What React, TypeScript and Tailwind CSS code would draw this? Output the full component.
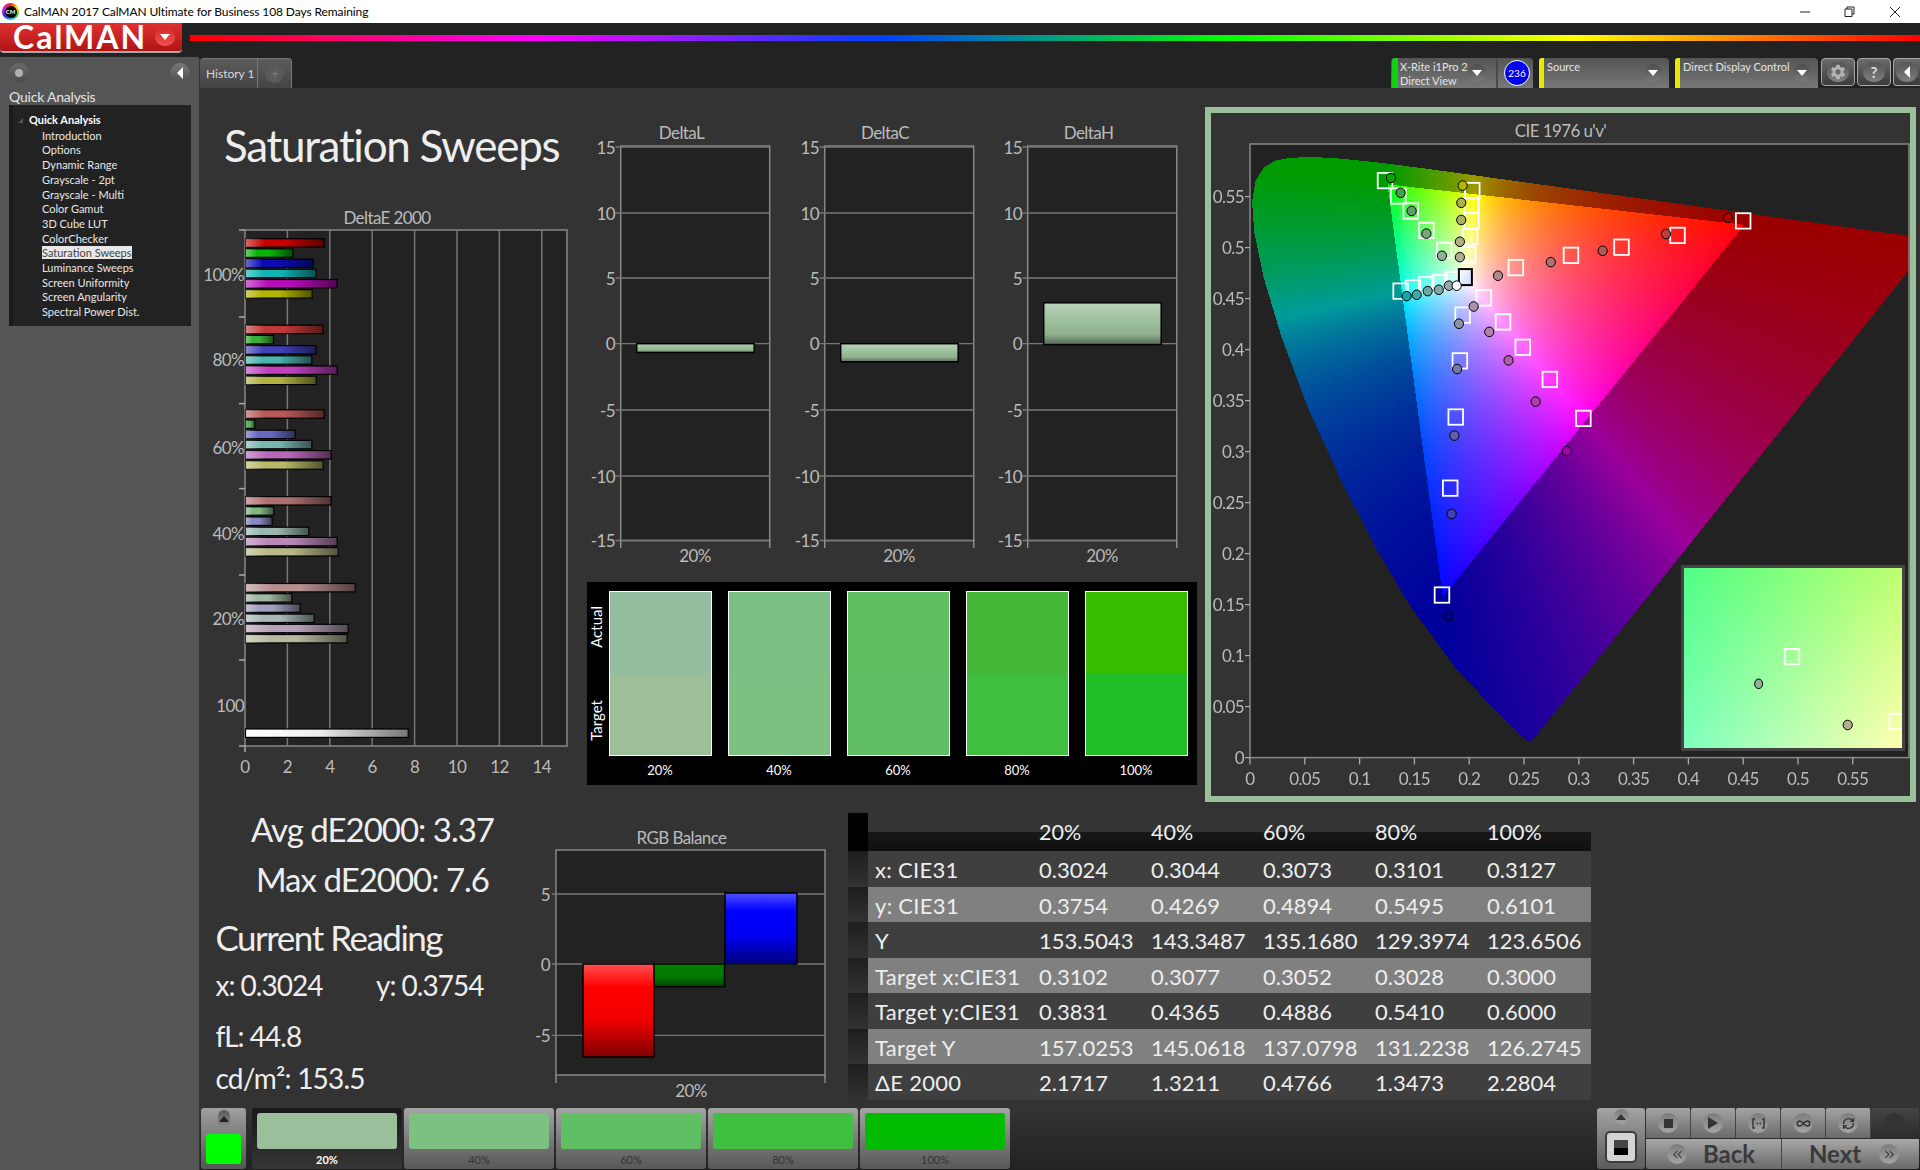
import React, { useEffect, useRef } from "react";
import { ChevronsLeft, ChevronsRight, Infinity as InfinityIcon, Plus, RefreshCw } from "lucide-react";
import { MdSettings } from "react-icons/md";

const menu = [
  "Introduction",
  "Options",
  "Dynamic Range",
  "Grayscale - 2pt",
  "Grayscale - Multi",
  "Color Gamut",
  "3D Cube LUT",
  "ColorChecker",
  "Saturation Sweeps",
  "Luminance Sweeps",
  "Screen Uniformity",
  "Screen Angularity",
  "Spectral Power Dist.",
];

// DeltaE bars: width in px, colour
const deltaGroups = [
  { top: 14.9, bars: [[78.7, "#c80000"], [47.3, "#08b408"], [67.7, "#0c0cb4"], [70.7, "#10b4b4"], [91.7, "#b80cb8"], [66.7, "#b4b400"]] },
  { top: 101.4, bars: [[77.7, "#c03838"], [28, "#38b038"], [70.7, "#4040b8"], [66.3, "#48b4b0"], [91.7, "#c040c0"], [70.7, "#b0b040"]] },
  { top: 186, bars: [[78.7, "#b85858"], [9.3, "#58b058"], [49.7, "#6868c0"], [66.3, "#78b8b0"], [85.7, "#b868b8"], [77.7, "#b8b868"]] },
  { top: 272.8, bars: [[85.7, "#b07070"], [28.3, "#80b880"], [26.7, "#8888c0"], [63.3, "#98b8b0"], [91.7, "#b888b8"], [92.7, "#b8b888"]] },
  { top: 359.7, bars: [[109.7, "#b88f8f"], [46.3, "#a0b8a0"], [54.7, "#a0a0c0"], [68.7, "#a8b8b8"], [102.7, "#b8a0b8"], [101.7, "#b8b8a0"]] },
] as { top: number; bars: [number, string][] }[];

const swatches = [
  { label: "20%", actual: "bg-[#94bc9f]", target: "bg-[#9cbf9a]" },
  { label: "40%", actual: "bg-[#7cbf84]", target: "bg-[#7dc182]" },
  { label: "60%", actual: "bg-[#60bf60]", target: "bg-[#60bf62]" },
  { label: "80%", actual: "bg-[#46b838]", target: "bg-[#40be40]" },
  { label: "100%", actual: "bg-[#38bc00]", target: "bg-[#1fbd26]" },
];

const tableRows = [
  ["x: CIE31", "0.3024", "0.3044", "0.3073", "0.3101", "0.3127"],
  ["y: CIE31", "0.3754", "0.4269", "0.4894", "0.5495", "0.6101"],
  ["Y", "153.5043", "143.3487", "135.1680", "129.3974", "123.6506"],
  ["Target x:CIE31", "0.3102", "0.3077", "0.3052", "0.3028", "0.3000"],
  ["Target y:CIE31", "0.3831", "0.4365", "0.4886", "0.5410", "0.6000"],
  ["Target Y", "157.0253", "145.0618", "137.0798", "131.2238", "126.2745"],
  ["ΔE 2000", "2.1717", "1.3211", "0.4766", "1.3473", "2.2804"],
];

const tiles = [
  { label: "20%", color: "bg-[#9bbf9b]" },
  { label: "40%", color: "bg-[#7dc182]" },
  { label: "60%", color: "bg-[#60bf62]" },
  { label: "80%", color: "bg-[#40bf40]" },
  { label: "100%", color: "bg-[#00bb00]" },
];

// spectral locus, CIE xy
const locus = [
  [0.1741, 0.005], [0.1733, 0.0048], [0.1714, 0.0051], [0.1644, 0.0109], [0.1566, 0.0177], [0.144, 0.0297],
  [0.1241, 0.0578], [0.1096, 0.0868], [0.0913, 0.1327], [0.0687, 0.2007], [0.0454, 0.295], [0.0235, 0.4127],
  [0.0082, 0.5384], [0.0039, 0.6548], [0.0139, 0.7502], [0.0389, 0.812], [0.0743, 0.8338], [0.1142, 0.8262],
  [0.1547, 0.8059], [0.1929, 0.7816], [0.2296, 0.7543], [0.3016, 0.6923], [0.3731, 0.6245], [0.4441, 0.5547],
  [0.5125, 0.4866], [0.5752, 0.4242], [0.627, 0.3725], [0.6915, 0.3083], [0.726, 0.274], [0.7347, 0.2653],
].map(([x, y]) => {
  const d = -2 * x + 12 * y + 3;
  return [(4 * x) / d, ((9 * y) / d) * 1.004];
});

const plotW = 659;
const plotH = 614;
const toX = (u: number) => 39 + u * 1096;
const toY = (v: number) => 613.6 - v * 1020;

function insideLocus(u: number, v: number) {
  let inside = false;
  for (let i = 0, j = locus.length - 1; i < locus.length; j = i++) {
    const [ui, vi] = locus[i];
    const [uj, vj] = locus[j];
    if (vi > v !== vj > v && u < ((uj - ui) * (v - vi)) / (vj - vi) + ui) inside = !inside;
  }
  return inside;
}

function gamutColor(u: number, v: number) {
  const d = 6 * u - 16 * v + 12;
  const x = (9 * u) / d;
  const y = (4 * v) / d;
  const X = x / y;
  const Z = (1 - x - y) / y;
  const rgb = [
    3.2406 * X - 1.5372 - 0.4986 * Z,
    -0.9689 * X + 1.8758 + 0.0415 * Z,
    0.0557 * X - 0.204 + 1.057 * Z,
  ];
  const outside = Math.min(...rgb) < 0;
  const clipped = rgb.map((c) => Math.max(c, 0));
  const max = Math.max(...clipped);
  if (outside) return clipped.map((c) => (c / max) * 155);
  return clipped.map((c) => Math.pow(c / max, 1 / 1.3) * 255);
}

function GamutCanvas() {
  const ref = useRef<HTMLCanvasElement>(null);
  useEffect(() => {
    const ctx = ref.current?.getContext("2d");
    if (!ctx) return;
    const img = ctx.createImageData(plotW, plotH);
    for (let py = 0; py < plotH; py++) {
      for (let px = 0; px < plotW; px++) {
        const u = px / 1096;
        const v = (613.6 - py) / 1020;
        const i = (py * plotW + px) * 4;
        if (insideLocus(u, v)) {
          const [r, g, b] = gamutColor(u, v);
          img.data[i] = r;
          img.data[i + 1] = g;
          img.data[i + 2] = b;
          img.data[i + 3] = 255;
        } else {
          img.data[i] = img.data[i + 1] = img.data[i + 2] = 34;
          img.data[i + 3] = 255;
        }
      }
    }
    ctx.putImageData(img, 0, 0);
  }, []);
  return <canvas ref={ref} width={plotW} height={plotH} className="block" />;
}

function InsetCanvas() {
  const ref = useRef<HTMLCanvasElement>(null);
  useEffect(() => {
    const ctx = ref.current?.getContext("2d");
    if (!ctx) return;
    const w = 218;
    const h = 180;
    const tl = [80, 255, 133];
    const tr = [190, 255, 112];
    const bl = [128, 255, 190];
    const br = [255, 255, 176];
    const img = ctx.createImageData(w, h);
    for (let y = 0; y < h; y++) {
      for (let x = 0; x < w; x++) {
        const i = (y * w + x) * 4;
        for (let c = 0; c < 3; c++) {
          const top = tl[c] + (tr[c] - tl[c]) * (x / w);
          const bottom = bl[c] + (br[c] - bl[c]) * (x / w);
          img.data[i + c] = top + (bottom - top) * (y / h);
        }
        img.data[i + 3] = 255;
      }
    }
    ctx.putImageData(img, 0, 0);
  }, []);
  return <canvas ref={ref} width={218} height={180} className="block" />;
}

const at = (zx: number, zy: number): [number, number] => [zx / 2.178 - 11, zy / 2.208 - 44];

const targets = [
  [403, 178], [432, 212], [459, 245], [493, 288], [532, 332],
  [593, 200], [591, 233], [591, 267], [588, 302], [584, 342],
  [437, 422], [464, 415], [493, 408], [522, 403], [550, 397],
  [1183, 267], [1040, 299], [918, 325], [808, 343], [688, 370],
  [835, 703], [762, 617], [703, 546], [660, 490], [618, 437],
  [527, 1093], [545, 857], [557, 700], [566, 576], [572, 475],
];

const readings: [number, number, string][] = [
  [416, 172, "#00a800"], [437, 205, "#44a050"], [461, 245, "#60a070"], [493, 295, "#78a880"], [527, 344, "#90b098"],
  [572, 189, "#b4b400"], [569, 227, "#b0b040"], [569, 265, "#b0b060"], [566, 313, "#b0b080"], [566, 347, "#b0b090"],
  [450, 433, "#10a8a8"], [472, 430, "#40a8a8"], [496, 422, "#68a8a8"], [520, 419, "#80a8a8"], [542, 410, "#98a8a8"],
  [1150, 260, "#b00000"], [1015, 296, "#b84040"], [877, 333, "#b05858"], [764, 358, "#b07070"], [649, 388, "#b08888"],
  [799, 775, "#a800a8"], [731, 666, "#b040a8"], [672, 575, "#b060a8"], [630, 512, "#b080a8"], [596, 456, "#a890a8"],
  [542, 1139, "#000090"], [548, 914, "#4040b0"], [554, 741, "#6060a8"], [560, 594, "#7878a8"], [564, 494, "#9090a8"],
];

const label = "fill-[#bbbbbb] text-[17px] tracking-[-0.6px]";
const chartTitle = "text-center text-[17px] tracking-[-0.6px] leading-[22px] text-[#bbbbbb]";

function Caret({ up = false, fill = "#fff" }: { up?: boolean; fill?: string }) {
  return (
    <svg width="10" height="6" viewBox="0 0 10 6">
      <path d={up ? "M5 0 L10 6 L0 6 Z" : "M0 0 L10 0 L5 6 Z"} fill={fill} />
    </svg>
  );
}

function Dropdown() {
  return (
    <div className="w-[18px] h-[18px] rounded-full bg-gradient-to-b from-[#4c4c4c] to-[#7c7c7c] flex items-center justify-center">
      <Caret />
    </div>
  );
}

function TitleBar() {
  return (
    <div className="h-[23px] bg-white flex items-center pl-[2px] text-[12px] text-black">
      <div className="w-[17px] h-[17px] rounded-full bg-[conic-gradient(#ff2020,#ffe000,#20d020,#20b0ff,#4020e0,#e020c0,#ff2020)] flex items-center justify-center">
        <div className="w-[12px] h-[12px] rounded-full bg-black text-white text-[6px] font-bold leading-[12px] text-center">CM</div>
      </div>
      <span className="ml-[5px] tracking-[-0.1px]">CalMAN 2017 CalMAN Ultimate for Business 108 Days Remaining</span>
      <div className="ml-auto flex items-center">
        <svg width="12" height="12" viewBox="0 0 12 12" className="mr-[33px]"><path d="M1 6 H11" stroke="#222" /></svg>
        <svg width="12" height="12" viewBox="0 0 12 12" className="mr-[33px]"><path d="M3 3 V1 H10 V8 H8 M1 3 H8 V10.5 H1 Z" stroke="#222" fill="none" /></svg>
        <svg width="12" height="12" viewBox="0 0 12 12" className="mr-[19px]"><path d="M1 1 L11 11 M11 1 L1 11" stroke="#222" /></svg>
      </div>
    </div>
  );
}

function Header() {
  return (
    <div className="h-[34px] bg-[#222222] flex items-start">
      <div className="w-[182px] h-[30px] rounded-b-[4px] bg-gradient-to-b from-[#e23030] to-[#b01414] border-b-2 border-[#a9a9a9] flex items-center pl-[13px] pr-[7px]">
        <span className="text-white text-[32px] leading-[28px] font-bold tracking-[2px]">CalMAN</span>
        <div className="ml-auto w-[20px] h-[18px] rounded-full bg-gradient-to-b from-[#d42a2a] to-[#f05050] flex items-center justify-center">
          <Caret />
        </div>
      </div>
      <div className="ml-[8px] mt-[12px] h-[6px] flex-1 bg-[linear-gradient(to_right,#ff0000,#ff00ff_20%,#0040ff_40%,#00ff00_60%,#ffff00_80%,#ff0000)]" />
    </div>
  );
}

function Sidebar() {
  return (
    <aside className="w-[200px] bg-[#555555] rounded-tr-[3px] border-r border-[#333333]">
      <div className="h-[31px] flex items-center justify-between px-[9px]">
        <div className="w-[20px] h-[20px] rounded-full bg-gradient-to-b from-[#6a6a6a] to-[#4c4c4c] flex items-center justify-center">
          <div className="w-[8px] h-[8px] rounded-full bg-[#b0b0b0]" />
        </div>
        <div className="w-[20px] h-[20px] rounded-full bg-gradient-to-b from-[#777777] to-[#505050] flex items-center justify-center">
          <svg width="6" height="12" viewBox="0 0 6 12"><path d="M6 0 V12 L0 6 Z" fill="#fff" /></svg>
        </div>
      </div>
      <div className="pl-[9px] text-[14px] leading-[18px] text-[#e4e4e4] tracking-[-0.2px]">Quick Analysis</div>
      <div className="ml-[9px] w-[182px] h-[221px] bg-[#222222] border-l-4 border-[#1a1a1a] mt-[-1px] pt-[8px] text-[11px] leading-[14.7px] text-[#e8e8e8]">
        <div className="pl-[5px] flex items-center font-bold mb-[1px] text-white">
          <svg width="5" height="5" viewBox="0 0 5 5" className="mr-[6px]"><path d="M5 0 V5 H0 Z" fill="#555" /></svg>
          Quick Analysis
        </div>
        {menu.map((item) => (
          <div key={item} className="pl-[29px]">
            <span className={item === "Saturation Sweeps" ? "bg-[#e8e8e8] text-[#444444]" : ""}>{item}</span>
          </div>
        ))}
      </div>
    </aside>
  );
}

function TabStrip() {
  return (
    <div className="h-[31px] bg-[#222222] flex items-end">
      <div className="w-[92px] h-[30px] rounded-t-[4px] border-t border-r border-[#777777] bg-gradient-to-b from-[#5c5c5c] to-[#444444] flex items-center text-[12px] text-[#d8d8d8]">
        <span className="w-[58px] pl-[6px] border-r border-[#777777] leading-[30px]">History 1</span>
        <div className="ml-[7px] w-[19px] h-[19px] rounded-full bg-[#5a5a5a] flex items-center justify-center">
          <Plus size={10} color="#888" />
        </div>
      </div>
      <div className="ml-auto flex items-start h-[30px] text-[11px] leading-[14px] text-[#e4e4e4]">
        <div className="w-[142px] h-[30px] rounded-t-[4px] bg-gradient-to-b from-[#555555] to-[#777777] flex">
          <div className="w-[6px] ml-[1px] bg-[#12d012] rounded-tl-[3px]" />
          <div className="w-[70px] pl-[2px] pt-[2px]">
            <div>X-Rite i1Pro 2</div>
            <div>Direct View</div>
          </div>
          <div className="w-[19px] pt-[6px]"><Dropdown /></div>
          <div className="ml-[9px] w-[2px] bg-[#4a4a4a]" />
          <div className="ml-[6px] mt-[2px] w-[26px] h-[26px] rounded-full bg-[#0000f0] border border-white text-white text-[10px] leading-[24px] text-center">236</div>
        </div>
        <div className="ml-[6px] w-[130px] h-[30px] rounded-t-[4px] bg-gradient-to-b from-[#555555] to-[#777777] flex">
          <div className="w-[5px] bg-[#e8e800] rounded-tl-[3px]" />
          <div className="flex-1 pl-[3px] pt-[2px]">Source</div>
          <div className="pr-[7px] pt-[6px]"><Dropdown /></div>
        </div>
        <div className="ml-[6px] w-[143px] h-[30px] rounded-t-[4px] bg-gradient-to-b from-[#555555] to-[#777777] flex">
          <div className="w-[5px] bg-[#e8e800] rounded-tl-[3px]" />
          <div className="flex-1 pl-[3px] pt-[2px]">Direct Display Control</div>
          <div className="pr-[7px] pt-[6px]"><Dropdown /></div>
        </div>
        <div className="ml-[3px] w-[34px] h-[28px] rounded-[4px] border border-[#a8a8a8] bg-gradient-to-b from-[#6c6c6c] to-[#3c3c3c] flex items-center justify-center">
          <div className="w-[22px] h-[20px] rounded-full bg-gradient-to-b from-[#555555] to-[#808080] flex items-center justify-center">
            <MdSettings size={18} color="#b4b4b4" />
          </div>
        </div>
        <div className="ml-[2px] w-[34px] h-[28px] rounded-[4px] border border-[#a8a8a8] bg-gradient-to-b from-[#6c6c6c] to-[#3c3c3c] flex items-center justify-center">
          <div className="w-[22px] h-[20px] rounded-full bg-gradient-to-b from-[#555555] to-[#808080] text-[#dddddd] font-bold text-[15px] leading-[20px] text-center">?</div>
        </div>
        <div className="ml-[2px] w-[27px] h-[28px] rounded-l-[4px] border border-r-0 border-[#a8a8a8] bg-gradient-to-b from-[#6c6c6c] to-[#3c3c3c] flex items-center justify-center">
          <div className="w-[22px] h-[20px] rounded-full bg-gradient-to-b from-[#555555] to-[#808080] flex items-center justify-center">
            <svg width="6" height="12" viewBox="0 0 6 12"><path d="M6 0 V12 L0 6 Z" fill="#fff" /></svg>
          </div>
        </div>
      </div>
    </div>
  );
}

function DeltaE2000() {
  const grid = [2, 4, 6, 8, 10, 12, 14];
  const ticks = [2, 89, 175.6, 260.6, 347, 432, 518];
  const rows: [string, number][] = [["100%", 46.6], ["80%", 131.6], ["60%", 219], ["40%", 305], ["20%", 390], ["100", 477]];
  return (
    <div>
      <div className={`w-[374px] pt-[1px] h-[22px] ${chartTitle}`}>DeltaE 2000</div>
      <svg width="387" height="552" className="block overflow-visible">
        <defs>
          <linearGradient id="barShade">
            <stop offset="0" stopColor="#fff" stopOpacity="0.4" />
            <stop offset="0.25" stopColor="#fff" stopOpacity="0" />
            <stop offset="0.5" stopColor="#000" stopOpacity="0" />
            <stop offset="1" stopColor="#000" stopOpacity="0.55" />
          </linearGradient>
          <linearGradient id="whiteBar">
            <stop offset="0" stopColor="#fff" />
            <stop offset="0.45" stopColor="#eee" />
            <stop offset="1" stopColor="#777" />
          </linearGradient>
        </defs>
        <rect x="45" y="2" width="322" height="516" fill="#222222" stroke="#888888" strokeWidth="1.5" />
        {grid.map((g) => (
          <line key={g} x1={45 + g * 21.2} x2={45 + g * 21.2} y1="2" y2="518" stroke="#777777" strokeWidth="1.5" />
        ))}
        {ticks.map((t) => (
          <line key={t} x1="39" x2="45" y1={t} y2={t} stroke="#aaaaaa" strokeWidth="1.5" />
        ))}
        {rows.map(([t, y]) => (
          <text key={t} x="44" y={y} textAnchor="end" dominantBaseline="central" className={label}>{t}</text>
        ))}
        {deltaGroups.map((group) =>
          group.bars.map(([w, color], i) => (
            <g key={color}>
              <rect x="45.5" y={group.top + i * 10.2 - 4.2} width={w} height="8.4" fill={color} stroke="#000" strokeWidth="1.2" />
              <rect x="45.5" y={group.top + i * 10.2 - 4.2} width={w} height="8.4" fill="url(#barShade)" />
            </g>
          )),
        )}
        <rect x="45.5" y="501" width="162.7" height="8.4" fill="url(#whiteBar)" stroke="#000" strokeWidth="1.2" />
        <line x1="45" x2="45" y1="518" y2="524" stroke="#aaaaaa" strokeWidth="1.5" />
        {[0, ...grid].map((g) => (
          <text key={g} x={45 + g * 21.2} y="538" textAnchor="middle" dominantBaseline="central" className={label}>{g}</text>
        ))}
      </svg>
    </div>
  );
}

function DeltaChart({ title, id, barTop, barBottom }: { title: string; id: string; barTop: number; barBottom: number }) {
  const rows: [string, number][] = [["15", 3], ["10", 69], ["5", 134], ["0", 199.7], ["-5", 266], ["-10", 332], ["-15", 396.5]];
  return (
    <div className="w-[203.5px]">
      <div className={`w-[189px] ${chartTitle}`}>{title}</div>
      <svg width="203.5" height="422" className="block overflow-visible">
        <defs>
          <linearGradient id={id} x2="0" y2="1">
            <stop offset="0" stopColor="#b8d2b8" />
            <stop offset="0.45" stopColor="#9bbf9b" />
            <stop offset="0.75" stopColor="#8fb08f" />
            <stop offset="1" stopColor="#566656" />
          </linearGradient>
        </defs>
        <rect x="33.7" y="2" width="149" height="394.5" fill="#222222" stroke="#888888" strokeWidth="1.5" />
        {rows.map(([t, y]) => (
          <g key={t}>
            <line x1="28.5" x2="183" y1={y} y2={y} stroke="#777777" strokeWidth="1.3" />
            <text x="28" y={y} textAnchor="end" dominantBaseline="central" className={label}>{t}</text>
          </g>
        ))}
        <path d="M33.7 396 V404 M182.8 396 V404" stroke="#999999" strokeWidth="1.3" />
        <rect x="49.7" y={barTop} width="117.5" height={barBottom - barTop} fill={`url(#${id})`} stroke="#000" strokeWidth="1.5" />
        <text x="108" y="411" textAnchor="middle" dominantBaseline="central" className={label}>20%</text>
      </svg>
    </div>
  );
}

function SwatchStrip() {
  return (
    <div className="mt-[16px] w-[610px] h-[203px] bg-black flex pt-[9px] text-white text-[13px]">
      <div className="w-[21.5px] pr-[3px] shrink-0 h-[165px] flex flex-col text-[15px]">
        <div className="h-[82px] flex items-center justify-center pb-[10px]">
          <span className="[writing-mode:vertical-rl] rotate-180">Actual</span>
        </div>
        <div className="h-[83px] flex items-center justify-center pt-[11px]">
          <span className="[writing-mode:vertical-rl] rotate-180">Target</span>
        </div>
      </div>
      <div className="flex gap-[16px]">
        {swatches.map((s) => (
          <div key={s.label} className="w-[103px] shrink-0 flex flex-col">
            <div className="h-[165px] border border-white flex flex-col">
              <div className={`h-[82px] ${s.actual}`} />
              <div className={`flex-1 ${s.target}`} />
            </div>
            <div className="mt-[6px] text-center leading-[16px]">{s.label}</div>
          </div>
        ))}
      </div>
    </div>
  );
}

function CieChart() {
  const ticks = [0, 0.05, 0.1, 0.15, 0.2, 0.25, 0.3, 0.35, 0.4, 0.45, 0.5, 0.55];
  const [wx, wy] = at(578, 391);
  const [ox, oy] = at(559, 410);
  return (
    <div className="ml-[8px] mt-[19px] w-[711px] h-[695px] border-[6px] border-[#9bbf9b] bg-[#333333]">
      <div className={`h-[31px] !leading-[35px] ${chartTitle}`}>CIE 1976 u'v'</div>
      <div className="relative h-[652px] pl-[39px]">
        <GamutCanvas />
        <svg width="699" height="652" className="absolute left-0 top-0 overflow-visible">
          <defs>
            <linearGradient id="whitePoint" x2="1" y2="1">
              <stop offset="0" stopColor="#fff" />
              <stop offset="1" stopColor="#c8d8ff" />
            </linearGradient>
          </defs>
          <rect x="39" y="0" width="659" height="613.6" fill="none" stroke="#888888" strokeWidth="1.5" />
          {ticks.map((u) => (
            <g key={u}>
              <line x1={toX(u)} x2={toX(u)} y1="613.6" y2="620.5" stroke="#aaaaaa" strokeWidth="1.3" />
              <text x={toX(u)} y="634.5" textAnchor="middle" dominantBaseline="central" className={label}>{u}</text>
              <line x1="34" x2="39" y1={toY(u)} y2={toY(u)} stroke="#aaaaaa" strokeWidth="1.3" />
              <text x="33" y={toY(u)} textAnchor="end" dominantBaseline="central" className={label}>{u}</text>
            </g>
          ))}
          {targets.map(([zx, zy]) => {
            const [x, y] = at(zx, zy);
            return <rect key={`${zx}-${zy}`} x={x - 7.3} y={y - 7.7} width="14.6" height="15.4" fill="none" stroke="#fff" strokeWidth="1.8" />;
          })}
          <rect x={wx - 6.5} y={wy - 8} width="13" height="16" fill="url(#whitePoint)" stroke="#000" strokeWidth="2" />
          {readings.map(([zx, zy, color]) => {
            const [x, y] = at(zx, zy);
            return <ellipse key={color} cx={x} cy={y} rx="4.6" ry="4.8" fill={color} stroke="#000" strokeWidth="1" />;
          })}
          <ellipse cx={ox} cy={oy} rx="4.6" ry="4.8" fill="#fff" stroke="#000" strokeWidth="1" />
        </svg>
        <div className="absolute left-[470px] top-[421px] w-[224px] h-[186px] border-[3px] border-[#444444] bg-[#999999]">
          <InsetCanvas />
          <svg width="218" height="180" className="absolute left-0 top-0">
            <rect x="100.7" y="80.9" width="14.6" height="15.4" fill="none" stroke="#fff" strokeWidth="1.8" />
            <rect x="205.5" y="145.7" width="14.6" height="15.4" fill="none" stroke="#fff" strokeWidth="1.8" />
            <ellipse cx="74.6" cy="115.8" rx="4" ry="4.8" fill="#90b098" stroke="#000" />
            <ellipse cx="163.7" cy="157" rx="4.6" ry="4.8" fill="#b0b090" stroke="#000" />
          </svg>
        </div>
      </div>
    </div>
  );
}

function Stats() {
  return (
    <div className="w-[345px] pt-[2px] text-[#eeeeee]">
      <div className="h-[50px] text-center text-[33px] tracking-[-1px] leading-[50px]">Avg dE2000: 3.37</div>
      <div className="h-[50px] text-center text-[33px] tracking-[-1px] leading-[50px]">Max dE2000: 7.6</div>
      <div className="mt-[8px] h-[50px] pl-[15.5px] text-[35px] tracking-[-1.5px] leading-[50px]">Current Reading</div>
      <div className="mt-[3px] h-[40px] pl-[15.5px] flex text-[28px] tracking-[-1px] leading-[40px]">
        <span className="w-[160.5px]">x: 0.3024</span>
        <span>y: 0.3754</span>
      </div>
      <div className="mt-[11px] h-[40px] pl-[15.5px] text-[28px] tracking-[-1px] leading-[40px]">fL: 44.8</div>
      <div className="mt-[2px] h-[40px] pl-[15.5px] text-[28px] tracking-[-0.8px] leading-[40px]">cd/m²: 153.5</div>
    </div>
  );
}

function RgbBalance() {
  const rows: [string, number][] = [["5", 45], ["0", 115], ["-5", 186.3]];
  const bars: [string, number, number, number, number][] = [
    ["balanceRed", 38, 115, 71, 93],
    ["balanceGreen", 109, 115, 70.5, 22.7],
    ["balanceBlue", 180, 44, 72, 71],
  ];
  return (
    <div className="w-[303px] pt-[25px]">
      <div className={`w-[273px] ${chartTitle}`}>RGB Balance</div>
      <svg width="303" height="258" className="block overflow-visible">
        <defs>
          <linearGradient id="balanceRed" x2="0" y2="1">
            <stop offset="0" stopColor="#ff5050" />
            <stop offset="0.25" stopColor="#ff0000" />
            <stop offset="0.6" stopColor="#f00000" />
            <stop offset="1" stopColor="#800000" />
          </linearGradient>
          <linearGradient id="balanceGreen" x2="0" y2="1">
            <stop offset="0" stopColor="#008000" />
            <stop offset="0.6" stopColor="#007800" />
            <stop offset="1" stopColor="#004000" />
          </linearGradient>
          <linearGradient id="balanceBlue" x2="0" y2="1">
            <stop offset="0" stopColor="#5050ff" />
            <stop offset="0.25" stopColor="#0000ff" />
            <stop offset="0.6" stopColor="#0000f0" />
            <stop offset="1" stopColor="#000080" />
          </linearGradient>
        </defs>
        <rect x="11" y="1" width="269" height="225" fill="#222222" stroke="#888888" strokeWidth="1.5" />
        {rows.map(([t, y]) => (
          <g key={t}>
            <line x1="7" x2="280" y1={y} y2={y} stroke="#777777" strokeWidth="1.3" />
            <text x="5" y={y} textAnchor="end" dominantBaseline="central" className={label}>{t}</text>
          </g>
        ))}
        <path d="M11 226 V234 M280 226 V234" stroke="#999999" strokeWidth="1.3" />
        {bars.map(([id, x, y, w, h]) => (
          <rect key={id} x={x} y={y} width={w} height={h} fill={`url(#${id})`} stroke="#000" strokeWidth="1.5" />
        ))}
        <text x="146" y="241" textAnchor="middle" dominantBaseline="central" className={label}>20%</text>
      </svg>
    </div>
  );
}

function ResultTable() {
  const cols = "grid grid-cols-[20px_171px_112px_112px_112px_112px_104px]";
  return (
    <div className="mt-[11px] w-[743px] text-[22px] text-[#eeeeee]">
      <div className={`${cols} h-[38px] text-[21.5px] bg-[linear-gradient(#343434_50%,#181818_50%,#101010)]`}>
        <div className="bg-black" />
        <div />
        {["20%", "40%", "60%", "80%", "100%"].map((c) => (
          <div key={c} className="leading-[38px]">{c}</div>
        ))}
      </div>
      {tableRows.map((row, i) => (
        <div key={row[0]} className={`${cols} h-[35.5px] leading-[37px] ${i % 2 === 0 ? "bg-[#3f3f3f]" : "bg-[#808080]"}`}>
          <div className="bg-gradient-to-b from-[#1e1e1e] to-[#333333]" />
          <div className="pl-[7px] tracking-[0.3px] whitespace-nowrap">{row[0]}</div>
          {row.slice(1).map((cell, c) => (
            <div key={c}>{cell}</div>
          ))}
        </div>
      ))}
    </div>
  );
}

function RoundIcon({ children, dark = false }: { children?: React.ReactNode; dark?: boolean }) {
  return (
    <div className={`w-[20px] h-[20px] rounded-full flex items-center justify-center ${dark ? "bg-[#333333]" : "bg-gradient-to-b from-[#7c7c7c] to-[#a4a4a4]"}`}>
      {children}
    </div>
  );
}

function BottomBar() {
  const controls = [
    <svg key="stop" width="9" height="9"><rect width="9" height="9" fill="#333" /></svg>,
    <svg key="play" width="10" height="12" viewBox="0 0 10 12"><path d="M0 0 L10 6 L0 12 Z" fill="#333" /></svg>,
    <svg key="range" width="13" height="11" viewBox="0 0 13 11"><path d="M3 1 H1 V10 H3 M10 1 H12 V10 H10" stroke="#333" strokeWidth="1.4" fill="none" /><path d="M4.5 5.5 H6 M7.5 5.5 H9" stroke="#333" strokeWidth="1.6" /></svg>,
    <InfinityIcon key="loop" size={15} color="#333" strokeWidth={2.4} />,
    <RefreshCw key="refresh" size={13} color="#333" strokeWidth={2.6} />,
  ];
  return (
    <div className="h-[62px] flex items-start bg-gradient-to-b from-[#333333] to-[#222222] pl-[1px]">
      <div className="w-[45px] h-[61px] rounded-[3px] bg-gradient-to-b from-[#a0a0a0] to-[#555555] flex flex-col items-center">
        <div className="mt-[2px] w-[12px] h-[18px] rounded-full bg-gradient-to-b from-[#5a5a5a] to-[#8c8c8c] flex items-center justify-center">
          <Caret up fill="#222" />
        </div>
        <div className="mt-[6px] w-[35px] h-[30px] rounded-[3px] bg-[#00ff00]" />
      </div>
      <div className="ml-[6px] flex gap-[2px]">
        {tiles.map((t, i) => (
          <div key={t.label} className={`w-[150px] h-[61px] rounded-[3px] px-[5px] pt-[5px] ${i === 0 ? "bg-gradient-to-b from-[#181818] to-[#363636] text-white font-bold" : "bg-gradient-to-b from-[#a4a4a4] to-[#585858] text-[#333333]"}`}>
            <div className={`h-[36px] rounded-[3px] ${t.color}`} />
            <div className="mt-[3px] text-center text-[11px] leading-[16px]">{t.label}</div>
          </div>
        ))}
      </div>
      <div className="ml-auto mr-[1px] flex">
        <div className="w-[48px] h-[61px] rounded-[3px] bg-gradient-to-b from-[#a4a4a4] to-[#5c5c5c] flex flex-col items-center">
          <div className="mt-[1px] w-[15px] h-[15px] rounded-full bg-gradient-to-b from-[#7c7c7c] to-[#a4a4a4] flex items-center justify-center">
            <Caret up fill="#333" />
          </div>
          <div className="mt-[7px] w-[32px] h-[32px] rounded-[5px] border-2 border-[#3c3c3c] bg-[#d4d4d4] flex items-center justify-center">
            <div className="w-[14px] h-[15px] bg-[linear-gradient(#444_50%,#000_50%)]" />
          </div>
        </div>
        <div className="ml-[1px] w-[273px] flex flex-col">
          <div className="flex h-[30px]">
            {controls.map((icon, i) => (
              <div key={i} className="w-[45px] border-r border-[#444444] rounded-t-[2px] bg-gradient-to-b from-[#a4a4a4] to-[#6a6a6a] flex items-center justify-center">
                <RoundIcon>{icon}</RoundIcon>
              </div>
            ))}
            <div className="flex-1 bg-gradient-to-b from-[#444444] to-[#2c2c2c] flex items-center justify-center">
              <RoundIcon dark />
            </div>
          </div>
          <div className="mt-[1px] flex h-[30px] text-[24px] font-bold text-[#3a3a3a]">
            <div className="w-[136px] border-r border-[#444444] rounded-bl-[3px] bg-gradient-to-b from-[#a8a8a8] to-[#6a6a6a] flex items-center pl-[21px]">
              <RoundIcon><ChevronsLeft size={15} color="#444" /></RoundIcon>
              <span className="ml-[16px] leading-[30px]">Back</span>
            </div>
            <div className="flex-1 rounded-br-[3px] bg-gradient-to-b from-[#a8a8a8] to-[#6a6a6a] flex items-center pl-[27px]">
              <span className="leading-[30px]">Next</span>
              <div className="ml-[18px]"><RoundIcon><ChevronsRight size={15} color="#444" /></RoundIcon></div>
            </div>
          </div>
        </div>
      </div>
    </div>
  );
}

export default function App() {
  return (
    <div className="w-[1920px] h-[1170px] overflow-hidden flex flex-col bg-[#222222] font-['Lato','Open_Sans',sans-serif]">
      <TitleBar />
      <Header />
      <div className="flex flex-1 min-h-0">
        <Sidebar />
        <main className="w-[1720px] flex flex-col">
          <TabStrip />
          <div className="h-[1020px] bg-[#333333] flex flex-col">
            <div className="h-[714px] flex">
              <div className="w-[387px]">
                <div className="h-[118px] pt-[31px] pl-[24px] text-[44px] tracking-[-1.3px] leading-[52px] text-[#eeeeee]">Saturation Sweeps</div>
                <DeltaE2000 />
              </div>
              <div className="w-[610px] pt-[34px]">
                <div className="flex">
                  <DeltaChart title="DeltaL" id="deltaL" barTop={199.7} barBottom={208.5} />
                  <DeltaChart title="DeltaC" id="deltaC" barTop={199.7} barBottom={217.8} />
                  <DeltaChart title="DeltaH" id="deltaH" barTop={158.8} barBottom={200.6} />
                </div>
                <SwatchStrip />
              </div>
              <CieChart />
            </div>
            <div className="h-[306px] flex">
              <Stats />
              <RgbBalance />
              <ResultTable />
            </div>
          </div>
          <BottomBar />
        </main>
      </div>
    </div>
  );
}
